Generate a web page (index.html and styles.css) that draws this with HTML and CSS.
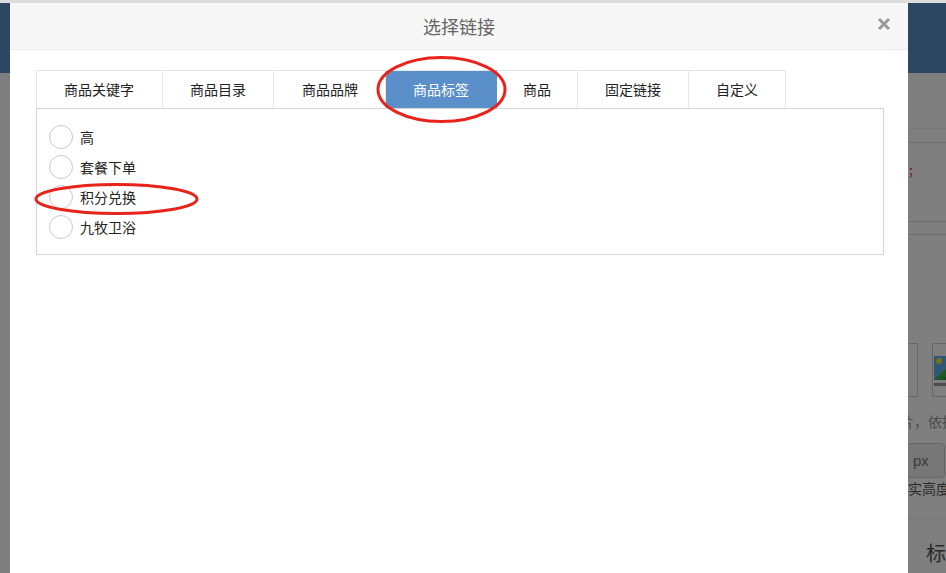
FILE: index.html
```html
<!DOCTYPE html>
<html lang="zh-CN">
<head>
<meta charset="utf-8">
<title>选择链接</title>
<link rel="stylesheet" href="styles.css">
</head>
<body>
<div class="screen">
  <div class="topline"></div>
  <div class="bg-page">
    <div class="bg-header"></div>
    <div class="bg-main">
      <div class="bg-side">
        <div class="bg-r1"></div>
        <div class="bg-r2"></div>
        <div class="bg-r3"><span class="bg-red">;</span></div>
        <div class="bg-r4"></div>
        <div class="bg-thumbs">
          <div class="bg-thumb bg-thumb-a"></div>
          <div class="bg-thumb bg-thumb-b">
            <svg width="40" height="32" viewBox="0 0 40 32">
              <rect x="0" y="0" width="40" height="24" fill="#5fb0e6"/>
              <circle cx="5" cy="5" r="3" fill="#f5e23a"/>
              <polygon points="0,24 22,4 40,24" fill="#3fae49"/>
              <polygon points="8,24 18,14 26,24" fill="#2e8f3a"/>
              <rect x="0" y="27" width="40" height="3" fill="#999"/>
            </svg>
          </div>
        </div>
        <div class="bg-hint">片，依据</div>
        <div class="bg-input">px</div>
        <div class="bg-hint2">真实高度</div>
        <div class="bg-line"></div>
        <div class="bg-tabs">
          <div class="bg-tab-cell"></div>
          <div class="bg-tab-text">标</div>
        </div>
      </div>
    </div>
  </div>
  <div class="overlay"></div>

  <div class="modal">
    <div class="modal-header">
      <h3 class="modal-title">选择链接</h3>
      <span class="modal-close">
        <svg width="14" height="14" viewBox="0 0 14 14"><path d="M2 2L12 12M12 2L2 12" stroke="#999" stroke-width="3" stroke-linecap="butt"/></svg>
      </span>
    </div>
    <div class="modal-body">
      <ul class="tabs">
        <li class="tab">商品关键字</li>
        <li class="tab">商品目录</li>
        <li class="tab">商品品牌</li>
        <li class="tab active">商品标签</li>
        <li class="tab">商品</li>
        <li class="tab">固定链接</li>
        <li class="tab">自定义</li>
      </ul>
      <div class="tab-panel">
        <label class="option"><span class="radio"></span><span class="option-text">高</span></label>
        <label class="option"><span class="radio"></span><span class="option-text">套餐下单</span></label>
        <label class="option"><span class="radio"></span><span class="option-text">积分兑换</span></label>
        <label class="option"><span class="radio"></span><span class="option-text">九牧卫浴</span></label>
      </div>
    </div>
  </div>

  <svg class="annotations" width="946" height="573" viewBox="0 0 946 573">
    <ellipse cx="441.5" cy="89.5" rx="63.5" ry="32" fill="none" stroke="#e8231b" stroke-width="3"/>
    <ellipse cx="116.5" cy="199" rx="80.5" ry="14.5" fill="none" stroke="#e8231b" stroke-width="3"/>
  </svg>
</div>
</body>
</html>
```

FILE: styles.css
```css
* { box-sizing: border-box; }

html, body {
  margin: 0;
  padding: 0;
  background: #ffffff;
}

body {
  font-family: "Noto Sans CJK SC", "Liberation Sans", sans-serif;
  font-size: 14px;
  color: #333;
}

.screen {
  position: relative;
  width: 946px;
  height: 573px;
  overflow: hidden;
}

.topline {
  height: 3px;
  background: #dcdcdc;
}

/* background page (dimmed) */
.bg-page {
  height: 570px;
}

.bg-header {
  height: 70px;
  background: #588ec4;
}

.bg-main {
  display: flex;
  justify-content: flex-end;
}

.bg-side {
  width: 52px;
  overflow: hidden;
  color: #999;
}

.bg-r1 {
  height: 56px;
  border-bottom: 1px solid #f0f0f0;
}

.bg-r2 {
  height: 14px;
  border-bottom: 1px solid #dddddd;
}

.bg-r3 {
  height: 79px;
  border-bottom: 1px solid #dddddd;
  padding: 18px 0 0 15px;
  line-height: 16px;
}

.bg-red {
  color: #e03a3a;
  font-size: 14px;
}

.bg-r4 {
  height: 13px;
  border-bottom: 1px solid #dddddd;
}

.bg-thumbs {
  display: flex;
  gap: 14px;
  margin-top: 108px;
  height: 54px;
}

.bg-thumb {
  border: 1px solid #cccccc;
  height: 54px;
  flex-shrink: 0;
}

.bg-thumb-a {
  width: 24px;
  border-left: none;
}

.bg-thumb-b {
  width: 54px;
  padding: 12px 0 0 1px;
}

.bg-thumb-b svg { display: block; }

.bg-hint {
  margin-top: 15px;
  padding-left: 6px;
  line-height: 18px;
  white-space: nowrap;
  color: #999;
}

.bg-input {
  margin: 13px 0 0 5px;
  width: 46px;
  height: 35px;
  border: 1px solid #cccccc;
  border-radius: 4px;
  background: #eeeeee;
  padding-left: 13px;
  line-height: 33px;
  font-family: "Liberation Sans", sans-serif;
  font-size: 15px;
  color: #777;
}

.bg-hint2 {
  margin-top: 2px;
  line-height: 16px;
  white-space: nowrap;
  color: #555;
}

.bg-line {
  margin-top: 22px;
  border-top: 1px solid #eeeeee;
}

.bg-tabs {
  display: flex;
  margin-top: 14px;
  height: 50px;
}

.bg-tab-cell {
  width: 17px;
  background: #f4f4f4;
  border-right: 1px solid #dddddd;
}

.bg-tab-text {
  padding: 8px 0 0 24px;
  font-size: 20px;
  line-height: 24px;
  color: #555;
  white-space: nowrap;
}

.overlay {
  position: absolute;
  top: 3px;
  left: 0;
  right: 0;
  bottom: 0;
  background: rgba(0, 0, 0, 0.5);
}

/* modal */
.modal {
  position: absolute;
  top: 3px;
  left: 10px;
  width: 898px;
  height: 580px;
  background: #ffffff;
}

.modal-header {
  position: relative;
  height: 47px;
  background: #f7f7f7;
  border-bottom: 1px solid #eaeaea;
  display: flex;
  align-items: center;
  justify-content: center;
}

.modal-title {
  margin: 0;
  font-size: 18px;
  font-weight: normal;
  color: #666;
  line-height: 24px;
}

.modal-close {
  position: absolute;
  top: 14px;
  right: 17px;
  width: 14px;
  height: 14px;
}

.modal-close svg { display: block; }

.modal-body {
  padding: 20px 24px 0 26px;
}

.tabs {
  display: flex;
  margin: 0;
  padding: 0;
  list-style: none;
}

.tab {
  padding: 0 27px;
  height: 38px;
  line-height: 37px;
  border-top: 1px solid #e6e6e6;
  border-right: 1px solid #e6e6e6;
  color: #222;
  font-size: 14px;
  white-space: nowrap;
}

.tab:first-child {
  border-left: 1px solid #e6e6e6;
  padding: 0 28px 0 27px;
}

.tab:nth-child(3) {
  padding: 0 27px 0 28px;
}

.tab.active {
  background: #5b8fca;
  color: #ffffff;
  border-right-color: #5b8fca;
}

.tab:nth-child(5) {
  padding: 0 26px;
}

.tab-panel {
  border: 1px solid #d5d5d5;
  padding: 13px 12px 12px;
}

.option {
  display: flex;
  align-items: center;
  height: 30px;
  gap: 7px;
}

.radio {
  width: 24px;
  height: 24px;
  border: 1px solid #c8c8c8;
  border-radius: 50%;
  background: #fff;
  flex-shrink: 0;
}

.option-text {
  font-size: 14px;
  color: #222;
  line-height: 20px;
}

.annotations {
  position: absolute;
  top: 0;
  left: 0;
  pointer-events: none;
}
```
